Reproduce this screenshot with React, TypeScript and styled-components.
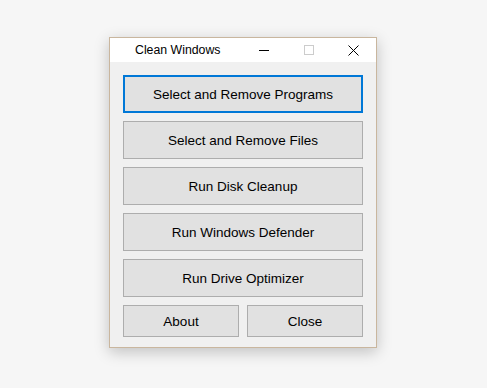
import React from 'react';
import styled, { createGlobalStyle } from 'styled-components';

const GlobalStyle = createGlobalStyle`
  html, body {
    margin: 0;
    padding: 0;
    background: #f6f6f6;
  }
  body {
    width: 487px;
    height: 388px;
    overflow: hidden;
  }
`;

const Stage = styled.div`
  padding: 37px 0 0 109px;
`;

const Window = styled.div`
  width: 266px;
  border: 1px solid #c9b69e;
  background: #f0f0f0;
  box-shadow: 0 4px 14px rgba(0, 0, 0, 0.22);
  display: flex;
  flex-direction: column;
`;

const TitleBar = styled.div`
  height: 24px;
  background: #ffffff;
  display: flex;
  align-items: center;
`;

const Title = styled.div`
  flex: 1;
  padding-left: 25px;
  font-family: 'Liberation Sans', Arial, sans-serif;
  font-size: 12.3px;
  color: #000;
`;

const CaptionButton = styled.div`
  width: 45px;
  height: 24px;
  display: flex;
  align-items: center;
  justify-content: center;
`;

const Body = styled.div`
  padding: 13px 13px 10px 13px;
  display: flex;
  flex-direction: column;
  gap: 8px;
`;

const Button = styled.button<{ $focused?: boolean; $short?: boolean }>`
  box-sizing: border-box;
  width: 100%;
  height: ${p => (p.$short ? '32px' : '38px')};
  margin: 0;
  padding: 0;
  background: #e1e1e1;
  border: ${p => (p.$focused ? '2px solid #0078d7' : '1px solid #adadad')};
  font-family: 'Liberation Sans', Arial, sans-serif;
  font-size: 13.5px;
  color: #000;
  outline: none;
`;

const Row = styled.div`
  display: grid;
  grid-template-columns: 1fr 1fr;
  gap: 8px;
`;

const items = [
  'Select and Remove Programs',
  'Select and Remove Files',
  'Run Disk Cleanup',
  'Run Windows Defender',
  'Run Drive Optimizer',
];

export default function App() {
  return (
    <>
      <GlobalStyle />
      <Stage>
        <Window>
          <TitleBar>
            <Title>Clean Windows</Title>
            <CaptionButton>
              <svg width="10" height="10" viewBox="0 0 10 10">
                <path d="M0 5.5h10" stroke="#000" strokeWidth="1" />
              </svg>
            </CaptionButton>
            <CaptionButton>
              <svg width="10" height="10" viewBox="0 0 10 10">
                <rect x="0.5" y="0.5" width="9" height="9" fill="none" stroke="#cccccc" strokeWidth="1" />
              </svg>
            </CaptionButton>
            <CaptionButton>
              <svg width="11" height="11" viewBox="0 0 11 11">
                <path d="M0.5 0.5L10.5 10.5M10.5 0.5L0.5 10.5" stroke="#000" strokeWidth="1" />
              </svg>
            </CaptionButton>
          </TitleBar>
          <Body>
            {items.map((label, i) => (
              <Button key={label} $focused={i === 0}>
                {label}
              </Button>
            ))}
            <Row>
              <Button $short>About</Button>
              <Button $short>Close</Button>
            </Row>
          </Body>
        </Window>
      </Stage>
    </>
  );
}
